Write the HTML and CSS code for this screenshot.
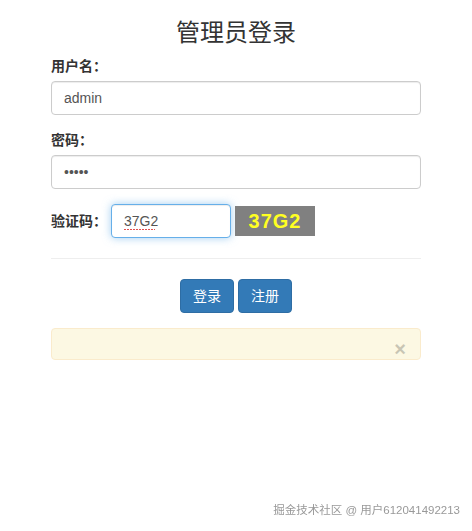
FILE: index.html
```html
<!DOCTYPE html>
<html lang="zh-CN">
<head>
    <meta charset="UTF-8">
    <meta name="viewport" content="width=device-width, initial-scale=1.0">
    <title>管理员登录</title>
    <link rel="stylesheet" href="styles.css">
</head>
<body>
    <div class="container">
        <h2 class="title">管理员登录</h2>

        <div class="form-group">
            <label for="username">用户名：</label>
            <input type="text" id="username" class="form-control" value="admin">
        </div>

        <div class="form-group">
            <label for="password">密码：</label>
            <input type="password" id="password" class="form-control" value="12345">
        </div>

        <div class="form-group code-row">
            <label for="code">验证码：</label>
            <input type="text" id="code" class="form-control code-input focused" value="37G2" spellcheck="false">
            <div class="captcha">37G2</div>
        </div>

        <hr>

        <div class="actions">
            <button class="btn btn-primary">登录</button>
            <button class="btn btn-primary">注册</button>
        </div>

        <div class="alert alert-warning">
            <span class="close">&times;</span>
        </div>
    </div>

    <div class="watermark">掘金技术社区 @ 用户612041492213</div>
</body>
</html>
```

FILE: styles.css
```css
body {
    margin: 0;
    font-family: "Liberation Sans", Arial, "Noto Sans CJK SC", sans-serif;
    font-size: 14px;
    line-height: 20px;
    color: #333;
    background: #fff;
}

.container {
    width: 370px;
    margin: 0 auto;
}

.title {
    margin: 0 0 8px;
    padding-top: 18px;
    font-size: 24px;
    font-weight: 400;
    line-height: 30px;
    text-align: center;
}

.form-group {
    margin-bottom: 15px;
}

.form-group label {
    display: block;
    margin-bottom: 5px;
    font-weight: bold;
}

.form-control {
    display: block;
    box-sizing: border-box;
    width: 100%;
    height: 34px;
    padding: 6px 12px;
    font-family: inherit;
    font-size: 14px;
    color: #555;
    background: #fff;
    border: 1px solid #ccc;
    border-radius: 4px;
    box-shadow: inset 0 1px 1px rgba(0, 0, 0, .075);
    outline: none;
}

.code-row {
    display: flex;
    align-items: center;
    margin-bottom: 0;
}

.code-row label {
    width: 60px;
    margin-bottom: 0;
}

.code-input {
    width: 120px;
}

/* focused field with the spell-check underline under its value */
.focused {
    border-color: #66afe9;
    box-shadow: inset 0 1px 1px rgba(0, 0, 0, .075), 0 0 8px rgba(102, 175, 233, .6);
    background-image: repeating-linear-gradient(90deg, #e05050 0 2px, transparent 2px 3px);
    background-size: 31px 1px;
    background-position: 12px 24px;
    background-repeat: no-repeat;
}

.captcha {
    width: 80px;
    height: 30px;
    margin-left: 4px;
    background: #808080;
    color: #ffff22;
    font-size: 20px;
    font-weight: bold;
    line-height: 30px;
    letter-spacing: 1px;
    text-align: center;
}

hr {
    margin: 20px 0;
    border: 0;
    border-top: 1px solid #eee;
}

.actions {
    display: flex;
    justify-content: center;
    gap: 4px;
    margin-bottom: 15px;
}

.btn {
    height: 34px;
    padding: 6px 12px;
    font-family: inherit;
    font-size: 14px;
    line-height: 20px;
    border-radius: 4px;
    cursor: pointer;
}

.btn-primary {
    color: #fff;
    background: #337ab7;
    border: 1px solid #2e6da4;
}

.alert {
    display: flex;
    justify-content: flex-end;
    align-items: flex-end;
    box-sizing: border-box;
    height: 32px;
    padding: 0 14px 0 0;
    border-radius: 4px;
}

.alert-warning {
    background: #fcf8e3;
    border: 1px solid #faebcc;
}

.close {
    font-size: 20px;
    font-weight: bold;
    line-height: 20px;
    color: #000;
    opacity: .2;
}

.watermark {
    position: fixed;
    right: 12px;
    bottom: 14px;
    font-size: 11.5px;
    color: #999;
    line-height: 14px;
}
```
